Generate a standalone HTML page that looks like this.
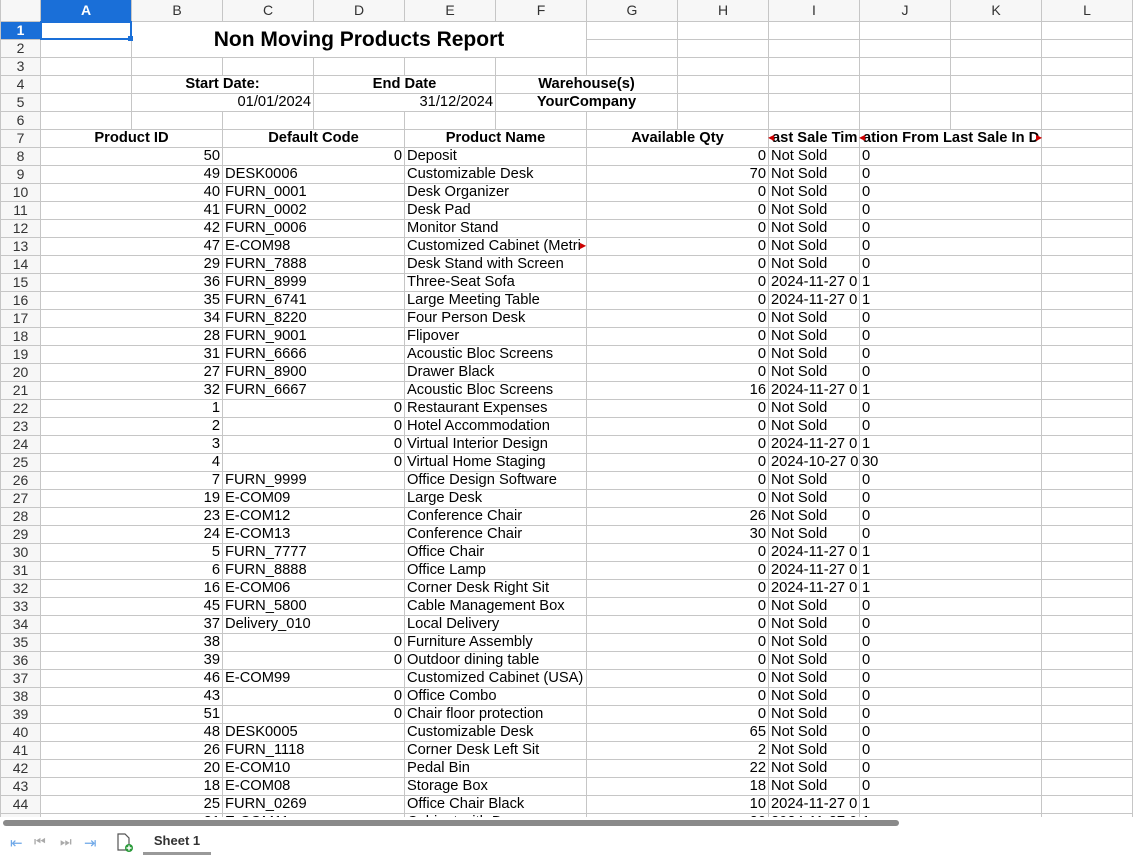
<!DOCTYPE html>
<html><head><meta charset="utf-8"><style>
body{margin:0;width:1133px;height:855px;overflow:hidden;background:#fff;font-family:"Liberation Sans",sans-serif;position:relative}
#wrap{position:absolute;left:0;top:0;width:1133px;height:817px;overflow:hidden}
table{border-collapse:collapse;table-layout:fixed;position:absolute;left:0;top:0;width:1132px}
tr{height:18px}
td,th{height:17px;padding:0 2px;border:1px solid #c6c6c6;font-size:14.7px;line-height:17px;white-space:nowrap;overflow:hidden;color:#000;font-weight:normal;box-sizing:border-box}
th{background:#f7f7f7;color:#333;text-align:center;font-size:14px;padding:0}
tr.h{height:21px}
tr.h th{height:21px;border-top:none}
td.r{text-align:right}
td.b{font-weight:bold;text-align:center}
td.t{font-weight:bold;font-size:21px;text-align:center;vertical-align:middle}
th.sel{background:#1a6fd8;color:#fff;font-weight:bold}
.ar{position:absolute;color:#c00;font-size:8px;line-height:8px}
</style></head><body>
<div id="wrap">
<table>
<colgroup><col style="width:40px"><col style="width:91px"><col style="width:91px"><col style="width:91px"><col style="width:91px"><col style="width:91px"><col style="width:91px"><col style="width:91px"><col style="width:91px"><col style="width:91px"><col style="width:91px"><col style="width:91px"><col style="width:91px"></colgroup>
<tr class="h"><th></th><th class="sel">A</th><th>B</th><th>C</th><th>D</th><th>E</th><th>F</th><th>G</th><th>H</th><th>I</th><th>J</th><th>K</th><th>L</th></tr>
<tr><th class="sel">1</th><td></td><td colspan="5" rowspan="2" class="t">Non Moving Products Report</td><td></td><td></td><td></td><td></td><td></td><td></td></tr>
<tr><th>2</th><td></td><td></td><td></td><td></td><td></td><td></td><td></td></tr>
<tr><th>3</th><td></td><td></td><td></td><td></td><td></td><td></td><td></td><td></td><td></td><td></td><td></td><td></td></tr>
<tr><th>4</th><td></td><td colspan="2" class="b">Start Date:</td><td colspan="2" class="b">End Date</td><td colspan="2" class="b">Warehouse(s)</td><td></td><td></td><td></td><td></td><td></td></tr>
<tr><th>5</th><td></td><td colspan="2" class="r">01/01/2024</td><td colspan="2" class="r">31/12/2024</td><td colspan="2" class="b">YourCompany</td><td></td><td></td><td></td><td></td><td></td></tr>
<tr><th>6</th><td></td><td></td><td></td><td></td><td></td><td></td><td></td><td></td><td></td><td></td><td></td><td></td></tr>
<tr><th>7</th><td colspan="2" class="b">Product ID</td><td colspan="2" class="b">Default Code</td><td colspan="2" class="b">Product Name</td><td colspan="2" class="b">Available Qty</td><td class="b" style="text-align:left;padding:0 0 0 3px">ast Sale Tim</td><td colspan="2" class="b" style="text-align:left;padding:0 0 0 3px">ation From Last Sale In D</td><td></td></tr>
<tr><th>8</th><td colspan="2" class="r">50</td><td colspan="2" class="r">0</td><td colspan="2">Deposit</td><td colspan="2" class="r">0</td><td>Not Sold</td><td colspan="2">0</td><td></td></tr>
<tr><th>9</th><td colspan="2" class="r">49</td><td colspan="2">DESK0006</td><td colspan="2">Customizable Desk</td><td colspan="2" class="r">70</td><td>Not Sold</td><td colspan="2">0</td><td></td></tr>
<tr><th>10</th><td colspan="2" class="r">40</td><td colspan="2">FURN_0001</td><td colspan="2">Desk Organizer</td><td colspan="2" class="r">0</td><td>Not Sold</td><td colspan="2">0</td><td></td></tr>
<tr><th>11</th><td colspan="2" class="r">41</td><td colspan="2">FURN_0002</td><td colspan="2">Desk Pad</td><td colspan="2" class="r">0</td><td>Not Sold</td><td colspan="2">0</td><td></td></tr>
<tr><th>12</th><td colspan="2" class="r">42</td><td colspan="2">FURN_0006</td><td colspan="2">Monitor Stand</td><td colspan="2" class="r">0</td><td>Not Sold</td><td colspan="2">0</td><td></td></tr>
<tr><th>13</th><td colspan="2" class="r">47</td><td colspan="2">E-COM98</td><td colspan="2">Customized Cabinet (Metri</td><td colspan="2" class="r">0</td><td>Not Sold</td><td colspan="2">0</td><td></td></tr>
<tr><th>14</th><td colspan="2" class="r">29</td><td colspan="2">FURN_7888</td><td colspan="2">Desk Stand with Screen</td><td colspan="2" class="r">0</td><td>Not Sold</td><td colspan="2">0</td><td></td></tr>
<tr><th>15</th><td colspan="2" class="r">36</td><td colspan="2">FURN_8999</td><td colspan="2">Three-Seat Sofa</td><td colspan="2" class="r">0</td><td>2024-11-27 0</td><td colspan="2">1</td><td></td></tr>
<tr><th>16</th><td colspan="2" class="r">35</td><td colspan="2">FURN_6741</td><td colspan="2">Large Meeting Table</td><td colspan="2" class="r">0</td><td>2024-11-27 0</td><td colspan="2">1</td><td></td></tr>
<tr><th>17</th><td colspan="2" class="r">34</td><td colspan="2">FURN_8220</td><td colspan="2">Four Person Desk</td><td colspan="2" class="r">0</td><td>Not Sold</td><td colspan="2">0</td><td></td></tr>
<tr><th>18</th><td colspan="2" class="r">28</td><td colspan="2">FURN_9001</td><td colspan="2">Flipover</td><td colspan="2" class="r">0</td><td>Not Sold</td><td colspan="2">0</td><td></td></tr>
<tr><th>19</th><td colspan="2" class="r">31</td><td colspan="2">FURN_6666</td><td colspan="2">Acoustic Bloc Screens</td><td colspan="2" class="r">0</td><td>Not Sold</td><td colspan="2">0</td><td></td></tr>
<tr><th>20</th><td colspan="2" class="r">27</td><td colspan="2">FURN_8900</td><td colspan="2">Drawer Black</td><td colspan="2" class="r">0</td><td>Not Sold</td><td colspan="2">0</td><td></td></tr>
<tr><th>21</th><td colspan="2" class="r">32</td><td colspan="2">FURN_6667</td><td colspan="2">Acoustic Bloc Screens</td><td colspan="2" class="r">16</td><td>2024-11-27 0</td><td colspan="2">1</td><td></td></tr>
<tr><th>22</th><td colspan="2" class="r">1</td><td colspan="2" class="r">0</td><td colspan="2">Restaurant Expenses</td><td colspan="2" class="r">0</td><td>Not Sold</td><td colspan="2">0</td><td></td></tr>
<tr><th>23</th><td colspan="2" class="r">2</td><td colspan="2" class="r">0</td><td colspan="2">Hotel Accommodation</td><td colspan="2" class="r">0</td><td>Not Sold</td><td colspan="2">0</td><td></td></tr>
<tr><th>24</th><td colspan="2" class="r">3</td><td colspan="2" class="r">0</td><td colspan="2">Virtual Interior Design</td><td colspan="2" class="r">0</td><td>2024-11-27 0</td><td colspan="2">1</td><td></td></tr>
<tr><th>25</th><td colspan="2" class="r">4</td><td colspan="2" class="r">0</td><td colspan="2">Virtual Home Staging</td><td colspan="2" class="r">0</td><td>2024-10-27 0</td><td colspan="2">30</td><td></td></tr>
<tr><th>26</th><td colspan="2" class="r">7</td><td colspan="2">FURN_9999</td><td colspan="2">Office Design Software</td><td colspan="2" class="r">0</td><td>Not Sold</td><td colspan="2">0</td><td></td></tr>
<tr><th>27</th><td colspan="2" class="r">19</td><td colspan="2">E-COM09</td><td colspan="2">Large Desk</td><td colspan="2" class="r">0</td><td>Not Sold</td><td colspan="2">0</td><td></td></tr>
<tr><th>28</th><td colspan="2" class="r">23</td><td colspan="2">E-COM12</td><td colspan="2">Conference Chair</td><td colspan="2" class="r">26</td><td>Not Sold</td><td colspan="2">0</td><td></td></tr>
<tr><th>29</th><td colspan="2" class="r">24</td><td colspan="2">E-COM13</td><td colspan="2">Conference Chair</td><td colspan="2" class="r">30</td><td>Not Sold</td><td colspan="2">0</td><td></td></tr>
<tr><th>30</th><td colspan="2" class="r">5</td><td colspan="2">FURN_7777</td><td colspan="2">Office Chair</td><td colspan="2" class="r">0</td><td>2024-11-27 0</td><td colspan="2">1</td><td></td></tr>
<tr><th>31</th><td colspan="2" class="r">6</td><td colspan="2">FURN_8888</td><td colspan="2">Office Lamp</td><td colspan="2" class="r">0</td><td>2024-11-27 0</td><td colspan="2">1</td><td></td></tr>
<tr><th>32</th><td colspan="2" class="r">16</td><td colspan="2">E-COM06</td><td colspan="2">Corner Desk Right Sit</td><td colspan="2" class="r">0</td><td>2024-11-27 0</td><td colspan="2">1</td><td></td></tr>
<tr><th>33</th><td colspan="2" class="r">45</td><td colspan="2">FURN_5800</td><td colspan="2">Cable Management Box</td><td colspan="2" class="r">0</td><td>Not Sold</td><td colspan="2">0</td><td></td></tr>
<tr><th>34</th><td colspan="2" class="r">37</td><td colspan="2">Delivery_010</td><td colspan="2">Local Delivery</td><td colspan="2" class="r">0</td><td>Not Sold</td><td colspan="2">0</td><td></td></tr>
<tr><th>35</th><td colspan="2" class="r">38</td><td colspan="2" class="r">0</td><td colspan="2">Furniture Assembly</td><td colspan="2" class="r">0</td><td>Not Sold</td><td colspan="2">0</td><td></td></tr>
<tr><th>36</th><td colspan="2" class="r">39</td><td colspan="2" class="r">0</td><td colspan="2">Outdoor dining table</td><td colspan="2" class="r">0</td><td>Not Sold</td><td colspan="2">0</td><td></td></tr>
<tr><th>37</th><td colspan="2" class="r">46</td><td colspan="2">E-COM99</td><td colspan="2">Customized Cabinet (USA)</td><td colspan="2" class="r">0</td><td>Not Sold</td><td colspan="2">0</td><td></td></tr>
<tr><th>38</th><td colspan="2" class="r">43</td><td colspan="2" class="r">0</td><td colspan="2">Office Combo</td><td colspan="2" class="r">0</td><td>Not Sold</td><td colspan="2">0</td><td></td></tr>
<tr><th>39</th><td colspan="2" class="r">51</td><td colspan="2" class="r">0</td><td colspan="2">Chair floor protection</td><td colspan="2" class="r">0</td><td>Not Sold</td><td colspan="2">0</td><td></td></tr>
<tr><th>40</th><td colspan="2" class="r">48</td><td colspan="2">DESK0005</td><td colspan="2">Customizable Desk</td><td colspan="2" class="r">65</td><td>Not Sold</td><td colspan="2">0</td><td></td></tr>
<tr><th>41</th><td colspan="2" class="r">26</td><td colspan="2">FURN_1118</td><td colspan="2">Corner Desk Left Sit</td><td colspan="2" class="r">2</td><td>Not Sold</td><td colspan="2">0</td><td></td></tr>
<tr><th>42</th><td colspan="2" class="r">20</td><td colspan="2">E-COM10</td><td colspan="2">Pedal Bin</td><td colspan="2" class="r">22</td><td>Not Sold</td><td colspan="2">0</td><td></td></tr>
<tr><th>43</th><td colspan="2" class="r">18</td><td colspan="2">E-COM08</td><td colspan="2">Storage Box</td><td colspan="2" class="r">18</td><td>Not Sold</td><td colspan="2">0</td><td></td></tr>
<tr><th>44</th><td colspan="2" class="r">25</td><td colspan="2">FURN_0269</td><td colspan="2">Office Chair Black</td><td colspan="2" class="r">10</td><td>2024-11-27 0</td><td colspan="2">1</td><td></td></tr>
<tr><th>45</th><td colspan="2" class="r">21</td><td colspan="2">E-COM11</td><td colspan="2">Cabinet with Doors</td><td colspan="2" class="r">20</td><td>2024-11-27 0</td><td colspan="2">1</td><td></td></tr>
</table>
<div style="position:absolute;left:40px;top:21px;width:88px;height:15px;border:2px solid #1a6fd8"></div>
<div style="position:absolute;left:128px;top:36px;width:5px;height:5px;background:#1a6fd8"></div>
<span class="ar" style="left:768px;top:134px">◀</span>
<span class="ar" style="left:859px;top:134px">◀</span>
<span class="ar" style="left:1036px;top:134px">▶</span>
<span class="ar" style="left:580px;top:242px">▶</span>
</div>
<div style="position:absolute;left:0;top:817px;width:1133px;height:38px;background:#fff"></div>
<div style="position:absolute;left:3px;top:820px;width:896px;height:6px;background:#8a8a8a;border-radius:3px"></div>
<div style="position:absolute;left:10px;top:834px;font-size:15px;color:#6fa8e8">⇤</div>
<div style="position:absolute;left:34px;top:834px;font-size:13px;color:#aaa">⏮</div>
<div style="position:absolute;left:60px;top:834px;font-size:13px;color:#aaa">⏭</div>
<div style="position:absolute;left:84px;top:834px;font-size:15px;color:#6fa8e8">⇥</div>
<svg style="position:absolute;left:116px;top:833px" width="18" height="20" viewBox="0 0 18 20"><path d="M2 1h7l4 4v12H2z" fill="#fff" stroke="#555" stroke-width="1.2"/><circle cx="13" cy="15" r="4" fill="#2a9a3a"/><path d="M13 12.5v5M10.5 15h5" stroke="#fff" stroke-width="1.4"/></svg>
<div style="position:absolute;left:143px;top:830px;width:68px;height:22px;font-size:13px;font-weight:bold;color:#333;text-align:center;line-height:22px;border-bottom:3px solid #999">Sheet 1</div>
</body></html>
